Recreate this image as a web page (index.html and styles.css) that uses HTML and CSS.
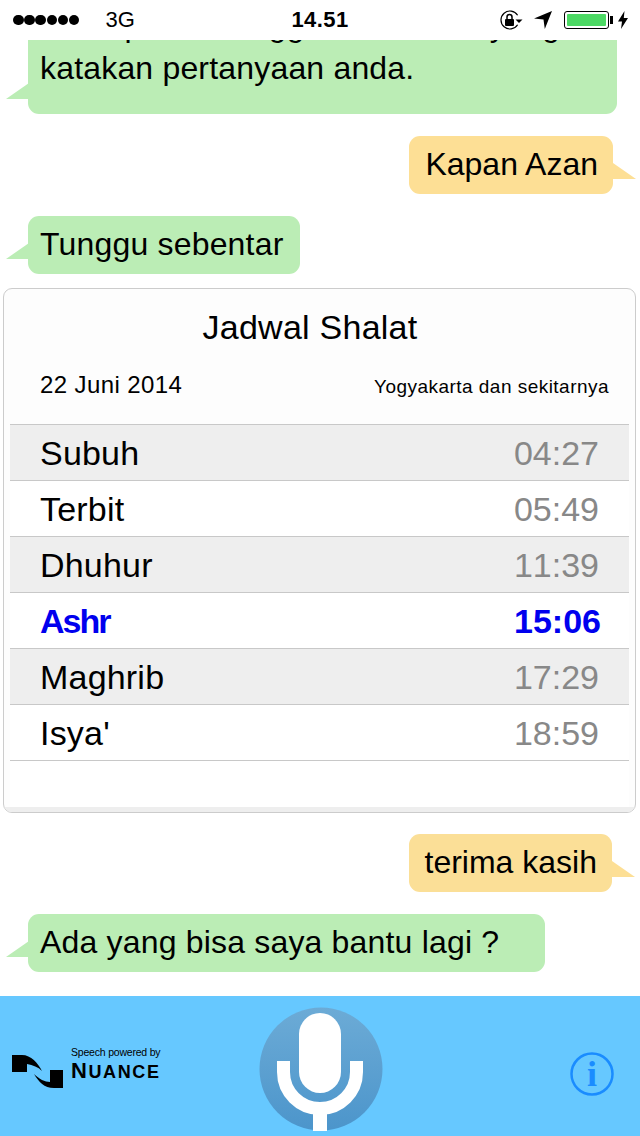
FILE: index.html
```html
<!DOCTYPE html>
<html lang="en">

<head>
    <meta charset="UTF-8">
    <meta name="viewport" content="width=device-width, initial-scale=1.0">
    <title>Jadwal Shalat</title>
    <link rel="stylesheet" href="styles.css">
</head>

<body>
    <div class="screen">
        <header class="status">
            <div class="status-left">
                <span class="dots"><i></i><i></i><i></i><i></i><i></i><i></i></span>
                <span class="network">3G</span>
            </div>
            <div class="clock">14.51</div>
            <div class="status-right">
                <svg class="ico-lock" width="24" height="20" viewBox="0 0 24 20">
                    <path d="M17.6 5.2A9 9 0 1 0 17.6 14.8" fill="none" stroke="#000" stroke-width="1.2"/>
                    <path d="M15.5 9.5h7l-3.5 3.6z" fill="#000"/>
                    <rect x="5" y="9" width="9" height="7" rx="1" fill="#000"/>
                    <path d="M7 9V7a2.5 2.5 0 0 1 5 0v2" fill="none" stroke="#000" stroke-width="1.5"/>
                </svg>
                <svg class="ico-arrow" width="18" height="18" viewBox="0 0 18 18">
                    <path d="M0 7.5L18 0 10.8 18 9.5 8.6z" fill="#000"/>
                </svg>
                <div class="battery"><div class="battery-fill"></div></div>
                <svg class="ico-bolt" width="10" height="18" viewBox="0 0 10 18">
                    <path d="M6.5 0L0 10.5h4L3 18l7-11H5.8z" fill="#000"/>
                </svg>
            </div>
        </header>

        <main class="chat">
            <div class="bubble bubble-in bubble-long">Anda perlu menggunakan kata yang<br>katakan pertanyaan anda.</div>
            <div class="bubble bubble-out">Kapan Azan</div>
            <div class="bubble bubble-in bubble-wait">Tunggu sebentar</div>

            <section class="card">
                <h1 class="card-title">Jadwal Shalat</h1>
                <div class="card-info">
                    <span class="card-date">22 Juni 2014</span>
                    <span class="card-place">Yogyakarta dan sekitarnya</span>
                </div>
                <ul class="times">
                    <li>Subuh<span>04:27</span></li>
                    <li>Terbit<span>05:49</span></li>
                    <li>Dhuhur<span>11:39</span></li>
                    <li class="now">Ashr<span>15:06</span></li>
                    <li>Maghrib<span>17:29</span></li>
                    <li>Isya'<span>18:59</span></li>
                </ul>
                <div class="card-foot"></div>
            </section>

            <div class="bubble bubble-out bubble-thanks">terima kasih</div>
            <div class="bubble bubble-in bubble-again">Ada yang bisa saya bantu lagi ?</div>
        </main>

        <footer class="bar">
            <div class="nuance">
                <svg class="nuance-mark" width="56" height="36" viewBox="0 0 56 36">
                    <path d="M0 0H10C19 0 26 8 30 16 26 12 21 10 15 9V17H0z" fill="#000"/>
                    <path d="M51 33H42C32 33 27 27 22 19 27 24 33 27 38 27V15H51z" fill="#000"/>
                </svg>
                <div class="nuance-text">
                    <div class="nuance-by">Speech powered by</div>
                    <div class="nuance-name"><span class="nuance-cap">N</span>UANCE</div>
                </div>
            </div>
            <svg class="mic" width="124" height="124" viewBox="0 0 124 124">
                <defs>
                    <linearGradient id="micbg" x1="0" y1="0" x2="0" y2="1">
                        <stop offset="0" stop-color="#6cabd6"/>
                        <stop offset="1" stop-color="#4c95cb"/>
                    </linearGradient>
                </defs>
                <circle cx="62" cy="62" r="61.500" fill="url(#micbg)"/>
                <rect x="40" y="6" width="42" height="80" rx="21" fill="#fff"/>
                <path d="M24.500 54V65A36.500 36.500 0 0 0 97.500 65V54" fill="none" stroke="#fff" stroke-width="13"/>
                <rect x="54" y="100" width="14" height="24" fill="#fff"/>
            </svg>
            <svg class="info" width="46" height="46" viewBox="0 0 46 46">
                <circle cx="23" cy="23" r="20.500" fill="none" stroke="#1a8cff" stroke-width="2.500"/>
                <text class="info-i" x="23" y="35" text-anchor="middle">i</text>
            </svg>
        </footer>
    </div>
</body>

</html>
```

FILE: styles.css
```css
* {
    margin: 0;
    padding: 0;
    box-sizing: border-box
}

body {
    background: #fff;
    font-family: "Liberation Sans", Arial, sans-serif;
    color: #000
}

.screen {
    width: 640px;
    height: 1136px;
    display: flex;
    flex-direction: column;
    overflow: hidden
}

/* status bar */
.status {
    height: 40px;
    flex: none;
    display: grid;
    grid-template-columns: 1fr auto 1fr;
    align-items: center;
    background: #fff
}

.status-left {
    display: flex;
    align-items: center;
    padding-left: 13px
}

.dots {
    display: flex;
    gap: .7px
}

.dots i {
    display: block;
    width: 10.500px;
    height: 10.500px;
    border-radius: 50%;
    background: #000
}

.network {
    margin-left: 26px;
    font-size: 22px
}

.clock {
    font-size: 22px;
    font-weight: bold;
    letter-spacing: .4px
}

.status-right {
    display: flex;
    align-items: center;
    justify-content: flex-end;
    padding-right: 12px
}

.ico-arrow {
    margin-left: 10px
}

.battery {
    position: relative;
    width: 45px;
    height: 18px;
    margin-left: 12px;
    padding: 2px;
    border: 1px solid #000;
    border-radius: 3px
}

.battery::after {
    content: "";
    position: absolute;
    right: -5px;
    top: 4px;
    width: 3px;
    height: 8px;
    background: #000
}

.battery-fill {
    height: 100%;
    background: #4cd964;
    border-radius: 1px
}

.ico-bolt {
    margin-left: 9px
}

/* chat */
.chat {
    flex: 1;
    min-height: 0;
    display: flex;
    flex-direction: column;
    justify-content: flex-end;
    padding-bottom: 24px;
    overflow: hidden
}

.bubble {
    position: relative;
    height: 58px;
    padding: 0 12px;
    font-size: 32px;
    line-height: 56px;
    letter-spacing: .18px;
    border-radius: 11px;
    flex: none;
    white-space: nowrap
}

.bubble::before {
    content: "";
    position: absolute;
    bottom: 15px;
    width: 23px;
    height: 16px
}

.bubble-in {
    align-self: flex-start;
    margin-left: 28px;
    background: #bbedb5
}

.bubble-in::before {
    left: -22px;
    background: #bbedb5;
    clip-path: polygon(100% 0, 100% 100%, 0 100%)
}

.bubble-out {
    align-self: flex-end;
    margin-right: 27px;
    margin-bottom: 22px;
    padding: 0 15px 0 16px;
    letter-spacing: 0;
    background: #fddf95
}

.bubble-out::before {
    right: -23px;
    background: #fddf95;
    clip-path: polygon(0 0, 100% 100%, 0 100%)
}

.bubble-thanks {
    margin-right: 28px;
    margin-top: 21px;
    background: #fbdf97
}

.bubble-long {
    width: 589px;
    height: auto;
    margin-bottom: 22px;
    padding-bottom: 24px;
    line-height: 43px
}

.bubble-wait {
    padding-right: 17px
}

.bubble-again {
    padding-right: 46px
}

/* prayer times card */
.card {
    flex: none;
    height: 525px;
    margin: 14px 4px 0 3px;
    display: flex;
    flex-direction: column;
    background: #fdfdfd;
    border: 1px solid #ccc;
    border-radius: 9px;
    overflow: hidden
}

.card-title {
    padding-top: 18px;
    font-size: 34px;
    line-height: 40px;
    font-weight: normal;
    letter-spacing: .25px;
    text-align: center;
    margin-right: 19px
}

.card-info {
    display: flex;
    justify-content: space-between;
    align-items: baseline;
    padding: 24px 26px 0 36px;
    height: 77px
}

.card-date {
    font-size: 24px;
    letter-spacing: .4px
}

.card-place {
    font-size: 19px;
    letter-spacing: .47px
}

.times {
    list-style: none;
    margin: 0 6px;
    flex: 1;
    background: #fff
}

.times li {
    display: flex;
    justify-content: space-between;
    height: 56px;
    padding: 0 30px;
    font-size: 34px;
    line-height: 56px;
    letter-spacing: .2px;
    border-top: 1px solid #c8c8c8
}

.times li:nth-child(odd) {
    background: #eee
}

.times li:last-child {
    height: 57px;
    border-bottom: 1px solid #c8c8c8
}

.times li span {
    color: #888;
    letter-spacing: 0;
    font-kerning: none
}

.times li.now {
    color: #0000ee;
    font-weight: bold;
    letter-spacing: -2px;
    padding-right: 28px
}

.times li.now span {
    color: #0000ee
}

.card-foot {
    height: 5px;
    flex: none;
    background: #eee
}

/* bottom bar */
.bar {
    height: 140px;
    flex: none;
    display: flex;
    align-items: flex-start;
    padding: 12px 25px 0 12px;
    background: #66c8ff
}

.nuance {
    width: 148px;
    margin-top: 37px;
    display: flex
}

.nuance-mark {
    flex: none;
    margin-top: 10px
}

.nuance-text {
    margin-left: 3px
}

.nuance-by {
    font-size: 10.500px;
    line-height: 14px;
    white-space: nowrap;
    letter-spacing: -.2px
}

.nuance-name {
    margin-top: 2px;
    font-size: 18px;
    line-height: 20px;
    font-weight: bold;
    letter-spacing: 1.600px;
    white-space: nowrap
}

.nuance-cap {
    font-size: 22px
}

.mic {
    flex: none;
    margin-left: 98.500px;
    margin-top: -1px
}

.info {
    flex: none;
    margin-left: auto;
    margin-top: 43px
}

.info-i {
    font-family: "Liberation Serif", serif;
    font-size: 36px;
    font-weight: bold;
    fill: #1a8cff
}
```
